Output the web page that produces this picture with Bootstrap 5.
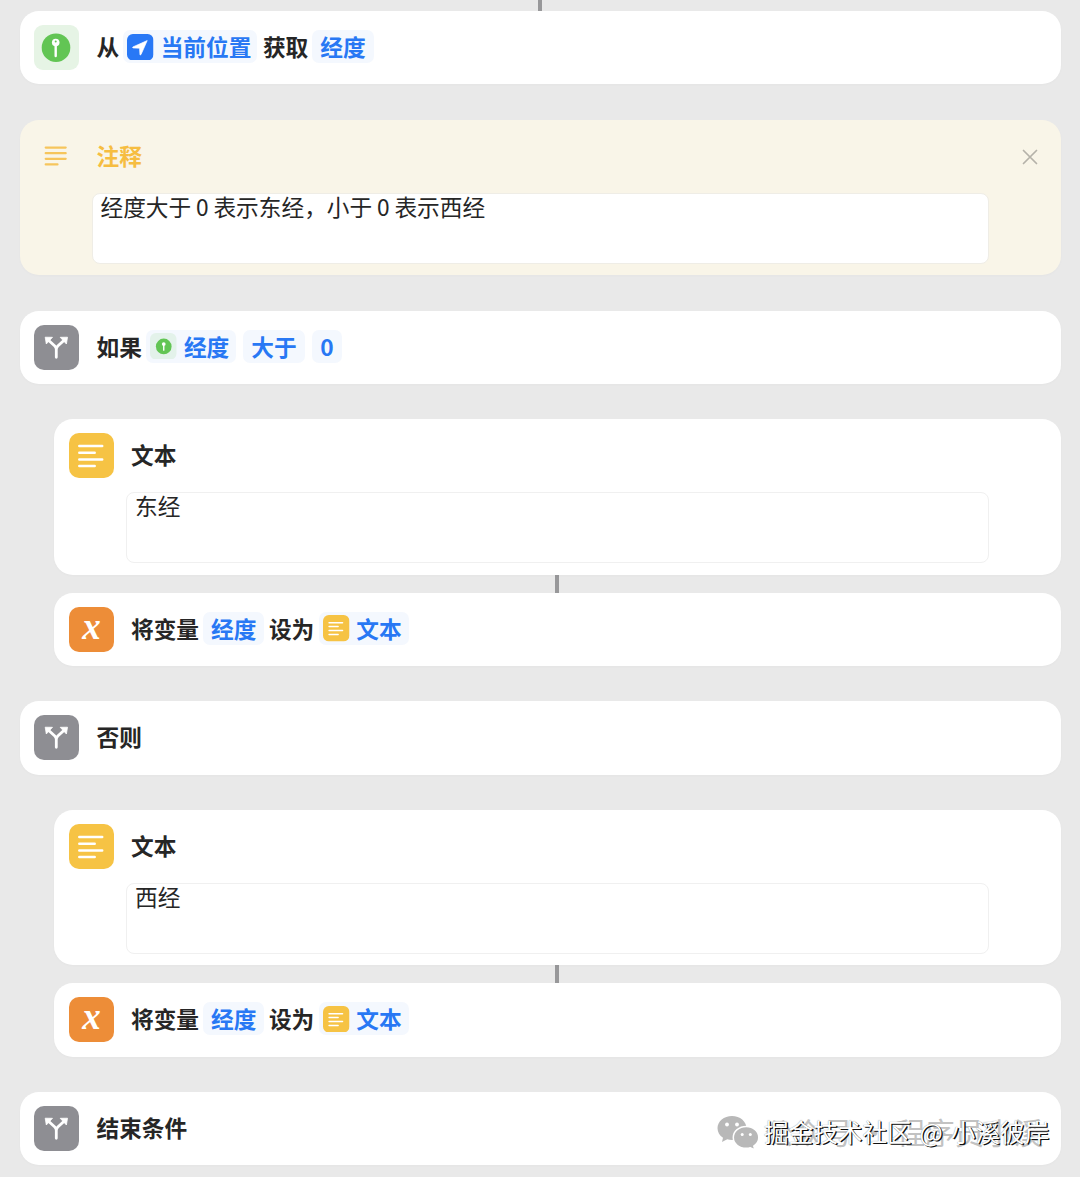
<!DOCTYPE html>
<html lang="zh-CN">
<head>
<meta charset="utf-8">
<meta name="viewport" content="width=device-width, initial-scale=1">
<title>快捷指令</title>
<link href="https://cdn.jsdelivr.net/npm/bootstrap@5.3.0/dist/css/bootstrap.min.css" rel="stylesheet">
<style>
  html, body { height: 1177px; overflow: hidden; }
  body { background: #e9e9e9; color: #262626; font-family: "Noto Sans CJK SC", sans-serif; font-size: 22.7px; line-height: 33px; }
  .flow { padding: 0 19.5px; }
  .nested { padding-left: 34.5px; }
  .step { background: #fff; border: 0; border-radius: 19px; box-shadow: 0 1px 3px rgba(0,0,0,.025); }
  .step-line { height: 73.2px; padding: 0 14.5px; font-weight: 700; white-space: nowrap; }
  .step-line .tile { margin-right: 17.5px; }
  .step-line > span { margin-top: -2px; }
  .step-tall { height: 155.5px; }
  .note { background: #f9f5e8; height: 155px; }
  .note .step-title { color: #f6bd41; margin-top: -3px; }
  .tile { width: 45px; height: 45px; flex: none; display: block; }
  .mini { width: 26.5px; height: 26.5px; flex: none; }
  .field { height: 70.5px; margin: 0 72px; border: 1.5px solid #f0f0f0; border-radius: 8px; background: #fff; padding: 0 8px; line-height: 25px; font-weight: 400; }
  .note .field { border-color: #efede6; }
  .zero { margin: 0 4.8px; }
  .chip { color: #2878f4; background: #f4f8fe; border-radius: 7px; height: 33px; padding: 0 8px; display: inline-flex; align-items: center; }
  .chip-icon { padding: 0 7px 0 4px; gap: 7px; }
  .link-line { width: 4px; background: #98989a; margin: 0 auto; }
  .gap-outer { height: 35.3px; }
  .mark-wx { left: 717px; top: 1115px; }
  .mark-under { left: 764px; top: 1115px; font-size: 29.6px; color: #c2c2c2; white-space: nowrap; line-height: 34px; gap: 6.5px; }
  .mark-over { left: 764px; top: 1114px; font-size: 24.6px; color: #fff; white-space: nowrap; line-height: 34px; word-spacing: 2.5px; text-shadow: 1.3px 1.3px .6px #111, 0 0 1px #777; }
</style>
<script src="https://cdn.jsdelivr.net/npm/bootstrap@5.3.0/dist/js/bootstrap.bundle.min.js"></script>
</head>
<body class="position-relative">
<svg width="0" height="0" class="position-absolute">
  <defs>
    <symbol id="i-pin" viewBox="0 0 45 45"><rect width="45" height="45" rx="9" fill="#e6f4e5"/><circle cx="22" cy="22.7" r="14.3" fill="#62c554"/><circle cx="21.7" cy="17.6" r="3.8" fill="#fff"/><path d="M21.7 20v11" stroke="#fff" stroke-width="2.4" stroke-linecap="round"/><circle cx="21.7" cy="16.4" r="1" fill="#62c554"/></symbol>
    <symbol id="i-fork" viewBox="0 0 45 45"><rect width="45" height="45" rx="10" fill="#8e8e93"/><path d="M22.3 32.3V24.5Q22.3 22.6 20.8 21.1L14.5 15.2M22.3 24.5Q22.3 22.6 23.8 21.1L30.1 15.2" fill="none" stroke="#fff" stroke-width="2.8" stroke-linecap="round"/><path d="M11.2 12.2l7.3.1-6.2 6.7zM33.5 12.2l-7.3.1 6.2 6.7z" fill="#fff" stroke="#fff" stroke-width=".8" stroke-linejoin="round"/></symbol>
    <symbol id="i-text" viewBox="0 0 45 45"><rect width="45" height="45" rx="10" fill="#f6c344"/><path d="M10.3 13H33.2M10.3 19.7H25.7M10.3 26.4H33.2M10.3 33.1H25.7" stroke="#fff" stroke-width="2.5" stroke-linecap="round"/></symbol>
    <symbol id="i-var" viewBox="0 0 45 45"><rect width="45" height="45" rx="10" fill="#ed8d38"/><text x="22.5" y="32.3" text-anchor="middle" font-family="Liberation Serif, serif" font-style="italic" font-weight="700" font-size="37" fill="#fff">x</text></symbol>
    <symbol id="i-loc" viewBox="0 0 27 27"><rect width="27" height="27" rx="6" fill="#2878f6"/><path d="M20.6 6.7L6 13.2Q5.2 14 6.4 14.2L12.8 14.4 13.2 20.9Q13.6 22 14.3 20.9Z" fill="#fff" stroke="#fff" stroke-width=".7" stroke-linejoin="round"/></symbol>
  </defs>
</svg>

<main class="flow d-flex flex-column">
  <div class="link-line" style="height:11.3px"></div>
  <section class="card step"><div class="step-line d-flex align-items-center">
    <svg class="tile"><use href="#i-pin"/></svg><span>从</span>
    <span class="chip chip-icon" style="margin-left:4px;padding-right:6px"><svg class="mini"><use href="#i-loc"/></svg>当前位置</span>
    <span style="margin-left:5.5px">获取</span><span class="chip" style="margin-left:4px">经度</span>
  </div></section>

  <div class="gap-outer" style="height:35.8px"></div>
  <section class="card step step-tall note">
    <div class="step-line d-flex align-items-center">
      <svg class="tile" viewBox="0 0 45 45"><path d="M11.7 13.6H31.7M11.7 19.2H31.7M11.7 24.8H31.7M11.7 30.4H23.5" stroke="#f6c55c" stroke-width="2.2" stroke-linecap="round"/></svg>
      <span class="step-title">注释</span>
      <svg class="ms-auto" width="16" height="16" viewBox="0 0 16 16" style="margin-right:8px"><path d="M1.5 1.5l13 13M14.5 1.5l-13 13" stroke="#b5b2a9" stroke-width="1.7" stroke-linecap="round"/></svg>
    </div>
    <div class="field">经度大于<span class="zero">0</span>表示东经，小于<span class="zero">0</span>表示西经</div>
  </section>

  <div class="gap-outer"></div>
  <section class="card step"><div class="step-line d-flex align-items-center">
    <svg class="tile"><use href="#i-fork"/></svg><span>如果</span>
    <span class="chip chip-icon" style="margin-left:4.5px"><svg class="mini" viewBox="0 0 27 27"><rect width="27" height="27" rx="6" fill="#e3f2ea"/><circle cx="14" cy="13.7" r="8" fill="#62c554"/><circle cx="14" cy="11.2" r="1.9" fill="#fff"/><path d="M14 11v6.5" stroke="#fff" stroke-width="1.4" stroke-linecap="round"/></svg>经度</span>
    <span class="chip" style="margin-left:7px">大于</span><span class="chip" style="margin-left:7.5px">0</span>
  </div></section>

  <div class="gap-outer"></div>
  <div class="nested">
    <section class="card step step-tall">
      <div class="step-line d-flex align-items-center"><svg class="tile"><use href="#i-text"/></svg><span>文本</span></div>
      <div class="field">东经</div>
    </section>
    <div class="link-line" style="height:18.3px"></div>
    <section class="card step"><div class="step-line d-flex align-items-center">
      <svg class="tile"><use href="#i-var"/></svg><span>将变量</span><span class="chip" style="margin-left:4px">经度</span>
      <span style="margin-left:4.5px">设为</span><span class="chip chip-icon" style="margin-left:5px;gap:6.5px"><svg class="mini"><use href="#i-text"/></svg>文本</span>
    </div></section>
  </div>

  <div class="gap-outer"></div>
  <section class="card step"><div class="step-line d-flex align-items-center"><svg class="tile"><use href="#i-fork"/></svg><span>否则</span></div></section>

  <div class="gap-outer"></div>
  <div class="nested">
    <section class="card step step-tall">
      <div class="step-line d-flex align-items-center"><svg class="tile"><use href="#i-text"/></svg><span>文本</span></div>
      <div class="field">西经</div>
    </section>
    <div class="link-line" style="height:18px"></div>
    <section class="card step"><div class="step-line d-flex align-items-center">
      <svg class="tile"><use href="#i-var"/></svg><span>将变量</span><span class="chip" style="margin-left:4px">经度</span>
      <span style="margin-left:4.5px">设为</span><span class="chip chip-icon" style="margin-left:5px;gap:6.5px"><svg class="mini"><use href="#i-text"/></svg>文本</span>
    </div></section>
  </div>

  <div class="gap-outer"></div>
  <section class="card step"><div class="step-line d-flex align-items-center"><svg class="tile"><use href="#i-fork"/></svg><span>结束条件</span></div></section>
</main>

<svg class="mark-wx position-absolute" width="43" height="36" viewBox="0 0 43 36">
  <path d="M15 1C7 1 .5 6.400 .5 13.200c0 4 2.200 7.300 5.500 9.500L5 27l5.200-2.700c1.600.5 3 .7 4.800.7 8 0 14.500-5.200 14.500-11.800S23 1 15 1z" fill="#b8b8b8"/>
  <path d="M29.300 11.500c-7.300 0-13 4.800-13 11s5.700 10.800 13 10.800c1.400 0 2.800-.2 4-.6L38 35l-1.200-4c3-2 5-5 5-8.500 0-6.200-5.500-11-12.500-11z" fill="#b8b8b8" stroke="#fff" stroke-width="1.500"/>
  <g fill="#fff"><circle cx="10" cy="9.500" r="1.900"/><circle cx="20" cy="9.500" r="1.900"/><circle cx="25.200" cy="19.500" r="1.500"/><circle cx="33.300" cy="19.500" r="1.500"/></g>
</svg>
<div class="mark-under position-absolute d-flex"><span>公众号</span><span>·</span><span>程序员小溪</span></div>
<div class="mark-over position-absolute">掘金技术社区 @ 小溪彼岸</div>
</body>
</html>
